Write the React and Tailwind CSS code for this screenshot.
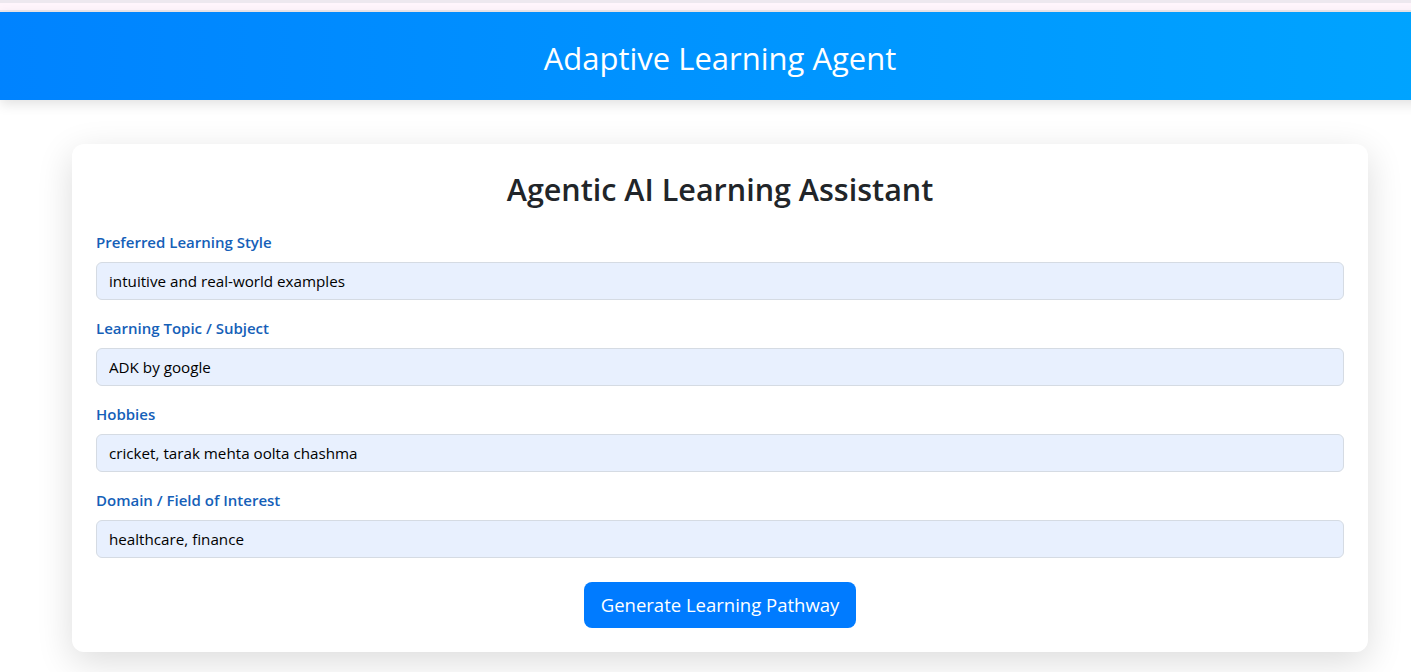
import React from 'react';

const fields = [
  { label: 'Preferred Learning Style', value: 'intuitive and real-world examples' },
  { label: 'Learning Topic / Subject', value: 'ADK by google' },
  { label: 'Hobbies', value: 'cricket, tarak mehta oolta chashma' },
  { label: 'Domain / Field of Interest', value: 'healthcare, finance' },
];

export default function App() {
  return (
    <div className="w-[1411px] h-[672px] overflow-hidden bg-white" style={{ fontFamily: '"Open Sans", "Noto Sans", sans-serif' }}>
      <div className="w-[1440px]">
        {/* browser-ish strip on top */}
        <div className="h-[3px] bg-[#ede8ef]" />
        <div className="h-[7px] bg-[#fff5fc]" />
        <div className="h-[2px] bg-[#ece8ec]" />

        <header className="h-[88px] flex items-center justify-center pt-1 bg-gradient-to-r from-[#0083ff] to-[#00a4ff] shadow-[0_4px_12px_rgba(0,0,0,0.12)] relative">
          <h1 className="text-[31px] text-white">Adaptive Learning Agent</h1>
        </header>

        <main className="px-[72px] pt-[44px]">
          <div className="bg-white rounded-xl px-6 pt-6 pb-6 shadow-[0_10px_36px_rgba(0,0,0,0.14)]">
            <h2 className="text-[30.5px] font-semibold text-[#212529] text-center leading-[38px] pt-[2px] mb-6 h-[38px]">
              Agentic AI Learning Assistant
            </h2>

            {fields.map((f) => (
              <div key={f.label} className="mb-4">
                <label className="block text-[15px] font-semibold text-[#1560b8] leading-6 mb-2">{f.label}</label>
                <input
                  readOnly
                  value={f.value}
                  className="w-full h-[38px] px-3 rounded-md border border-[#d5dbe3] bg-[#e8f0fe] text-[15.2px] text-black outline-none"
                />
              </div>
            ))}

            <div className="flex justify-center pt-2">
              <button className="w-[272px] h-[46px] rounded-lg bg-[#007bff] text-white text-[18.5px]">
                Generate Learning Pathway
              </button>
            </div>
          </div>
        </main>
      </div>
    </div>
  );
}
